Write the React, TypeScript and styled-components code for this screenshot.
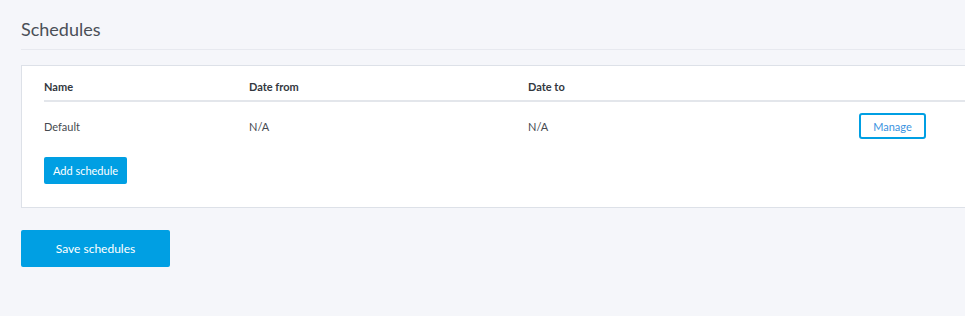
import * as React from 'react';
import styled, { createGlobalStyle } from 'styled-components';

const GlobalStyles = createGlobalStyle`
  html, body {
    margin: 0;
    padding: 0;
    background: #f5f6fa;
    overflow: hidden;
    font-family: Lato, "Open Sans", sans-serif;
  }
`;

const Page = styled.div`
  width: 1010px;
  padding: 18px 0 40px 21px;
`;

const Title = styled.h2`
  margin: 0;
  font-size: 18px;
  line-height: 22px;
  font-weight: 400;
  color: #4a4f57;
  padding-bottom: 9px;
  border-bottom: 1px solid #e7e9ef;
`;

const Card = styled.div`
  margin-top: 15px;
  background: #ffffff;
  border: 1px solid #dde1e8;
  padding: 0 0 23px 22px;
`;

const Row = styled.div<{ $head?: boolean }>`
  display: grid;
  grid-template-columns: 205px 279px 331px 67px 1fr;
  align-items: center;
  font-size: 11px;
  line-height: 13px;
  color: ${({ $head }) => ($head ? '#333840' : '#464a50')};
  font-weight: ${({ $head }) => ($head ? 700 : 400)};
  padding: ${({ $head }) => ($head ? '14px 0 7px' : '11px 0 11px')};
  border-bottom: ${({ $head }) => ($head ? '2px solid #e3e6eb' : 'none')};
`;

const Cell = styled.div``;

const OutlineButton = styled.button`
  box-sizing: border-box;
  width: 67px;
  height: 26px;
  border: 2px solid #009fe3;
  border-radius: 3px;
  background: #ffffff;
  color: #3b93e0;
  font-family: inherit;
  font-size: 11px;
  padding: 0;
  cursor: pointer;
`;

const PrimaryButton = styled.button<{ $large?: boolean }>`
  box-sizing: border-box;
  display: block;
  border: none;
  border-radius: 2px;
  background: #009fe3;
  color: #ffffff;
  font-family: inherit;
  cursor: pointer;
  font-size: ${({ $large }) => ($large ? '12px' : '11px')};
  width: ${({ $large }) => ($large ? '149px' : '83px')};
  height: ${({ $large }) => ($large ? '37px' : '27px')};
  padding: 0;
`;

const AddWrap = styled.div`
  margin-top: 7px;
`;

const SaveWrap = styled.div`
  margin-top: 22px;
`;

const schedules = [{ name: 'Default', from: 'N/A', to: 'N/A' }];

export default function App() {
  return (
    <>
      <GlobalStyles />
      <Page>
        <Title>Schedules</Title>
        <Card>
          <Row $head>
            <Cell>Name</Cell>
            <Cell>Date from</Cell>
            <Cell>Date to</Cell>
            <Cell />
            <Cell />
          </Row>
          {schedules.map((s) => (
            <Row key={s.name}>
              <Cell>{s.name}</Cell>
              <Cell>{s.from}</Cell>
              <Cell>{s.to}</Cell>
              <Cell>
                <OutlineButton>Manage</OutlineButton>
              </Cell>
              <Cell />
            </Row>
          ))}
          <AddWrap>
            <PrimaryButton>Add schedule</PrimaryButton>
          </AddWrap>
        </Card>
        <SaveWrap>
          <PrimaryButton $large>Save schedules</PrimaryButton>
        </SaveWrap>
      </Page>
    </>
  );
}
